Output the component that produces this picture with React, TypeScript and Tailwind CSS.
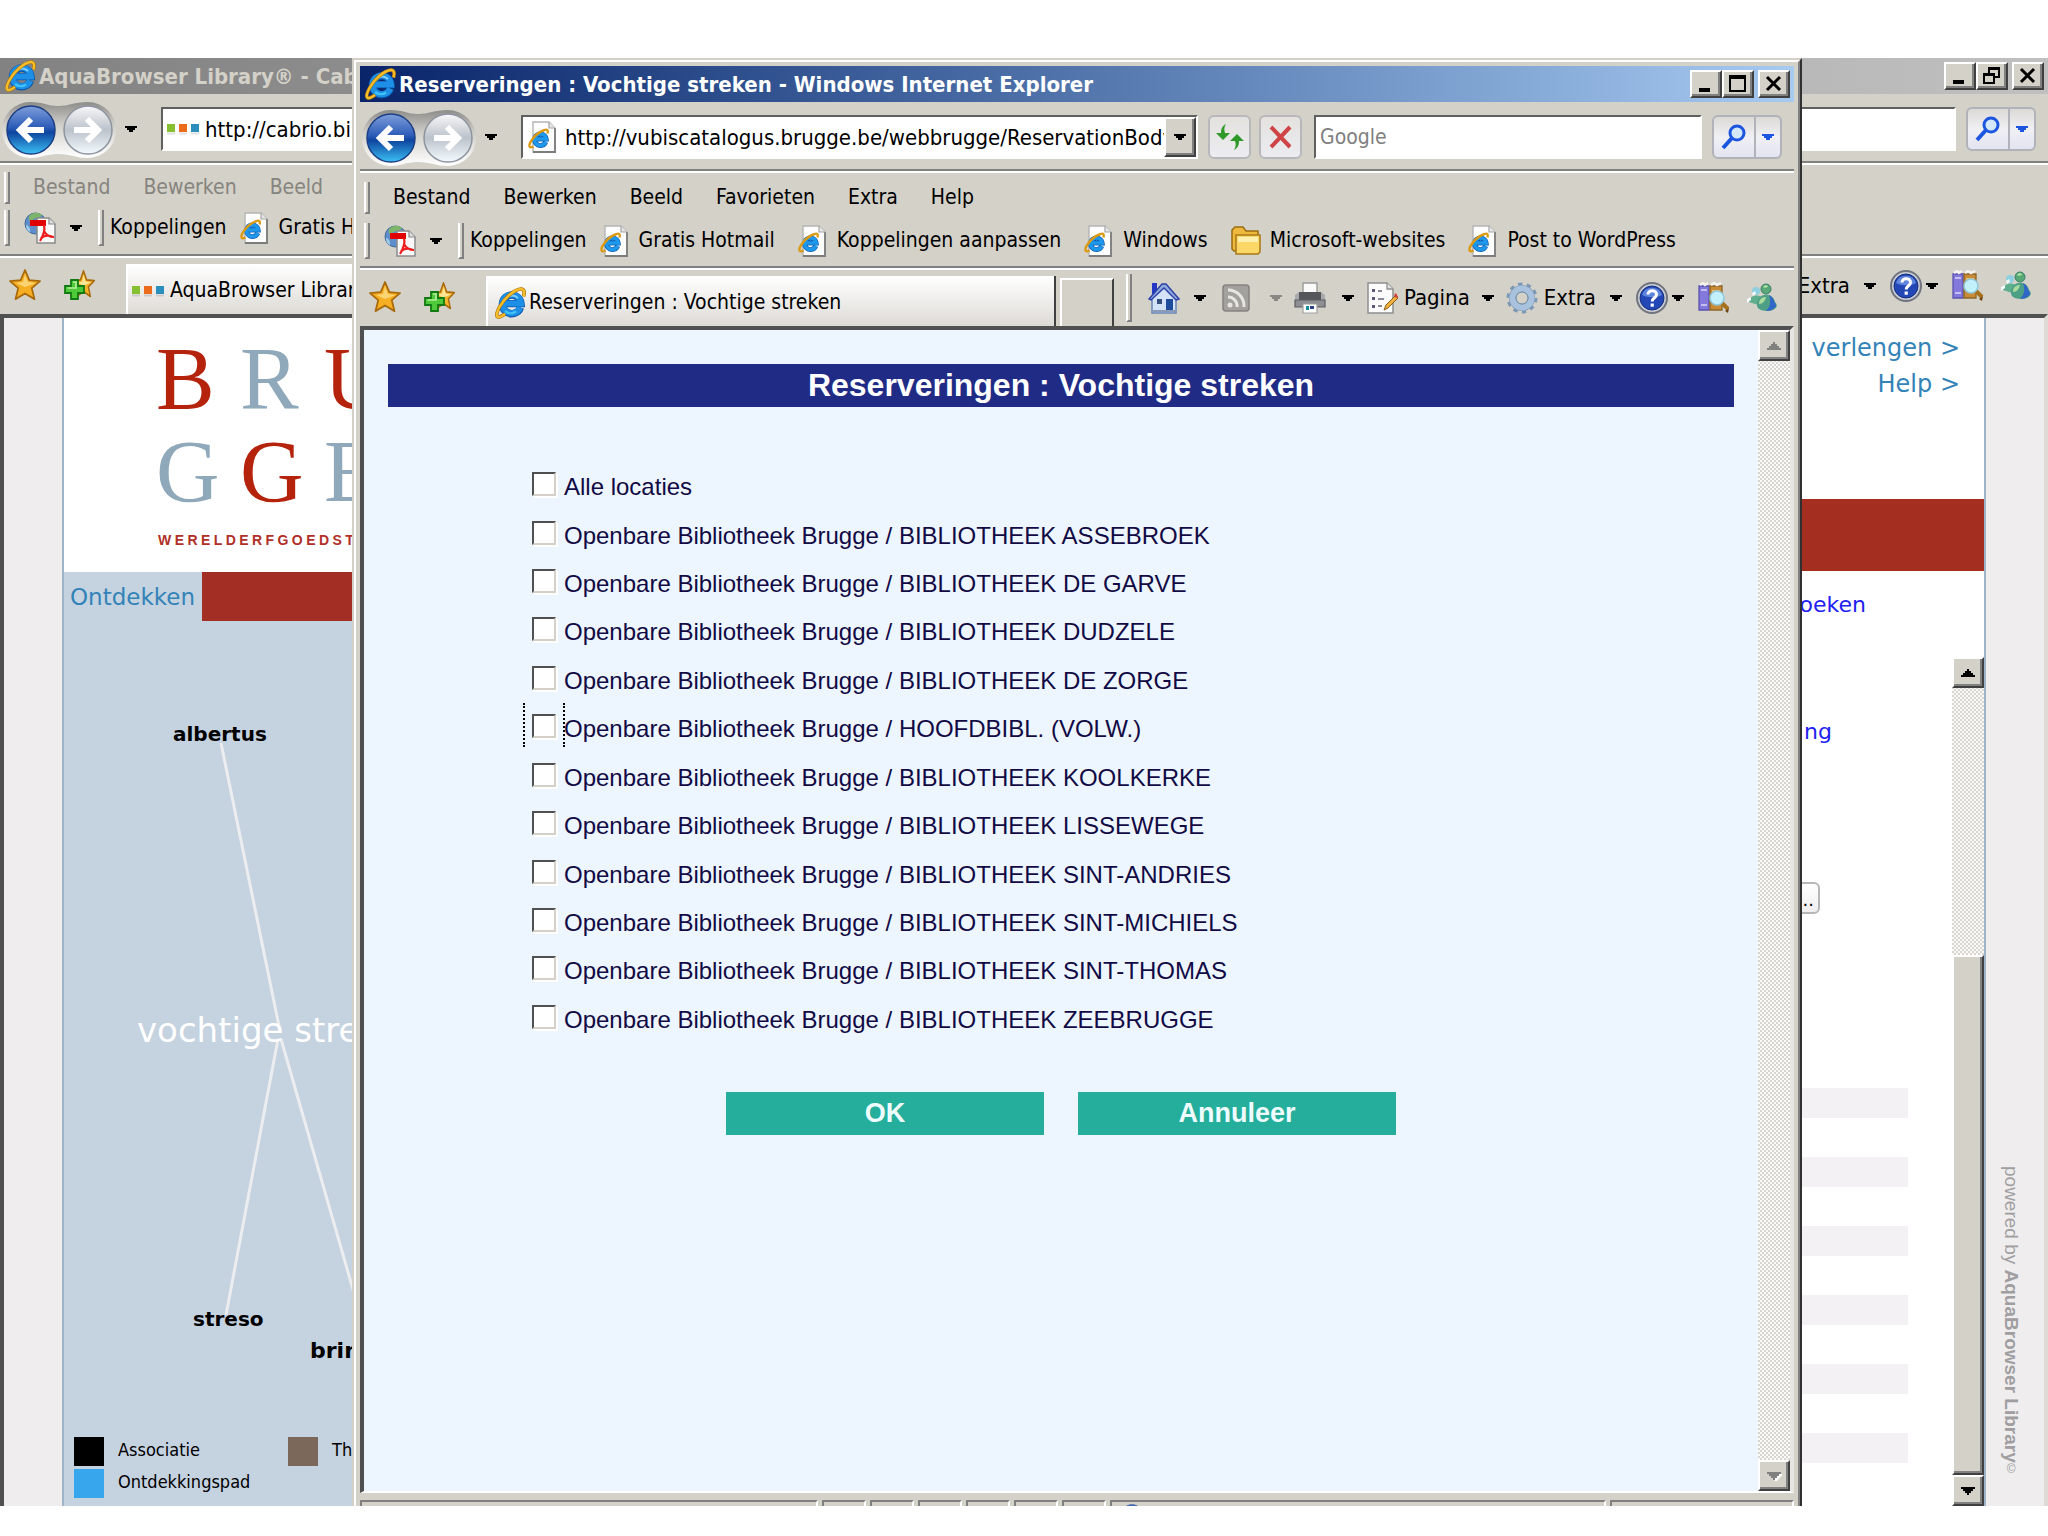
import React from 'react';

const raised =
  'border-2 border-t-white border-l-white border-r-[#404040] border-b-[#404040] bg-[#d4d1c9] shadow-[inset_-2px_-2px_0_#808080]';
const sunken = 'border-2 border-t-[#606060] border-l-[#606060] border-r-white border-b-white bg-white';
const dither = 'bg-[repeating-conic-gradient(#d8d4ce_0_25%,#fbfafa_0_50%)] bg-[length:4px_4px]';
const uiFont = "font-['DejaVu_Sans_Condensed','DejaVu_Sans',sans-serif]";
const pageFont = "font-['DejaVu_Sans',sans-serif]";

const locations = [
  'Alle locaties',
  'Openbare Bibliotheek Brugge / BIBLIOTHEEK ASSEBROEK',
  'Openbare Bibliotheek Brugge / BIBLIOTHEEK DE GARVE',
  'Openbare Bibliotheek Brugge / BIBLIOTHEEK DUDZELE',
  'Openbare Bibliotheek Brugge / BIBLIOTHEEK DE ZORGE',
  'Openbare Bibliotheek Brugge / HOOFDBIBL. (VOLW.)',
  'Openbare Bibliotheek Brugge / BIBLIOTHEEK KOOLKERKE',
  'Openbare Bibliotheek Brugge / BIBLIOTHEEK LISSEWEGE',
  'Openbare Bibliotheek Brugge / BIBLIOTHEEK SINT-ANDRIES',
  'Openbare Bibliotheek Brugge / BIBLIOTHEEK SINT-MICHIELS',
  'Openbare Bibliotheek Brugge / BIBLIOTHEEK SINT-THOMAS',
  'Openbare Bibliotheek Brugge / BIBLIOTHEEK ZEEBRUGGE',
];
const focusedLocation = 5;

/* ---------- icons ---------- */

function IeLogo({ className = 'size-8' }: { className?: string }) {
  return (
    <svg viewBox="0 0 32 32" className={`${className} shrink-0`} aria-hidden="true">
      <path d="M26.5 20.5A9.3 9.3 0 1 1 27 16.6H11" fill="none" stroke="#0a55a8" strokeWidth="7.4" />
      <path d="M26.3 20.5A9.3 9.3 0 1 1 27 16.6H11" fill="none" stroke="#1d8fe6" strokeWidth="6" />
      <path d="M10.5 12.5A9 9 0 0 1 24 11" fill="none" stroke="#7fd0ff" strokeWidth="2" />
      <path d="M11 24A9 9 0 0 0 22 24.5" fill="none" stroke="#3fc4f5" strokeWidth="2.4" />
      <path d="M29.5 9.5C31 5 30 1.5 26.5 2 20 2.8 10.5 11 5.5 20 1.5 27.5 2 31 6 29.8c1.6-.5 3.4-1.6 5-2.9" fill="none" stroke="#a8700a" strokeWidth="3.6" />
      <path d="M29.5 9.5C31 5 30 1.5 26.5 2 20 2.8 10.5 11 5.5 20 1.5 27.5 2 31 6 29.8c1.6-.5 3.4-1.6 5-2.9" fill="none" stroke="#f5bd2a" strokeWidth="2.4" />
    </svg>
  );
}

function IePage() {
  return (
    <svg viewBox="0 0 32 32" className="size-8 shrink-0" aria-hidden="true">
      <path d="M6 1h16l6 6v24H6z" fill="#fdfdfd" stroke="#b4b4b4" strokeWidth="1.4" />
      <path d="M28 7v24H6" fill="none" stroke="#7c7c7c" strokeWidth="1.8" />
      <path d="M22 1v6h6" fill="#e6e6e6" stroke="#a4a4a4" strokeWidth="1.2" />
      <path d="M18.8 21A5.8 5.8 0 1 1 19.2 18H9" fill="none" stroke="#0f5fb4" strokeWidth="4.8" />
      <path d="M18.8 21A5.8 5.8 0 1 1 19.2 18H9" fill="none" stroke="#1e98ea" strokeWidth="3.4" />
      <path d="M20.5 12.5C21.5 9 20 8 17.5 9 12 11 6.500 16 3.500 21c-2.200 4.500-1 6.500 3 4.500" fill="none" stroke="#dc9a12" strokeWidth="2.400" />
    </svg>
  );
}

function SiteDots() {
  return (
    <svg viewBox="0 0 32 12" className="h-3 w-8 shrink-0" aria-hidden="true">
      <rect x="0" y="1" width="8" height="8" fill="#86bf30" />
      <rect x="12" y="1" width="8" height="8" fill="#ec6a1c" />
      <rect x="24" y="1" width="8" height="8" fill="#2c8ebc" />
      <path d="M0 10.500h8M12 10.500h8M24 10.500h8" stroke="#000" strokeOpacity=".12" strokeWidth="2" />
    </svg>
  );
}

function Caret({ className = 'text-black' }: { className?: string }) {
  return (
    <svg viewBox="0 0 12 8" className={`h-2 w-3 shrink-0 ${className}`} aria-hidden="true">
      <path d="M0 1h12v2h-2v2H8v2H4V5H2V3H0z" fill="currentColor" />
    </svg>
  );
}

function PdfGlobe() {
  return (
    <svg viewBox="0 0 32 32" className="size-8 shrink-0" aria-hidden="true">
      <circle cx="11.500" cy="11.500" r="10.500" fill="#5d8ecb" stroke="#3d6695" strokeWidth="1" />
      <path d="M5 4c4-4 10-4 13-1-2 4-9 2-10 6-2 1-4-1-3-5z" fill="#7fb56b" />
      <path d="M2 13c2 0 5 3 4 7-3-1-4-4-4-7z" fill="#9cc9e8" />
      <path d="M13 6h12l6 6v19H13z" fill="#f8f8f8" stroke="#8a8a8a" strokeWidth="1.500" />
      <path d="M25 6v6h6" fill="#ddd" stroke="#8a8a8a" strokeWidth="1.200" />
      <path d="M6 8h16v6H6z" fill="#e00000" />
      <path d="M20 13c1 4 1 8-4 16M20 19c2 4 5 6 10 6M17 26c4-3 8-3 12-1" fill="none" stroke="#ee1c1c" strokeWidth="2.200" />
    </svg>
  );
}

const starPath = 'M16 1l4.300 10.200 10.700.900-8.200 7 2.700 11L16 24.500 6.500 30.100l2.700-11-8.200-7 10.700-.900z';

function Star() {
  return (
    <svg viewBox="0 0 32 32" className="size-8 shrink-0" aria-hidden="true">
      <path d={starPath} fill="#f6ae22" stroke="#a86a0c" strokeWidth="1.800" strokeLinejoin="round" />
      <path d="M16 5l3 8 8 1-11 4-9-4 7-1z" fill="#fbd474" />
    </svg>
  );
}

function StarAdd() {
  return (
    <svg viewBox="0 0 32 32" className="size-8 shrink-0" aria-hidden="true">
      <g transform="translate(9 1) scale(.72 .88)">
        <path d={starPath} fill="#f6b42c" stroke="#a86a0c" strokeWidth="2" strokeLinejoin="round" />
        <path d="M16 5l3 8 8 1-11 4-9-4 7-1z" fill="#fce596" />
      </g>
      <path d="M8 11h7v6h6v7h-6v6H8v-6H2v-7h6z" fill="#4fc93a" stroke="#127a12" strokeWidth="1.800" />
      <path d="M10 13h3v6H4.500" fill="none" stroke="#b4f09c" strokeWidth="1.600" />
    </svg>
  );
}

function HomeIcon() {
  return (
    <svg viewBox="0 0 32 32" className="size-8 shrink-0" aria-hidden="true">
      <path d="M4 1h5v11H4z" fill="#2438c4" />
      <path d="M4 15L16 4l12 11v16H4z" fill="#d3e2f6" stroke="#6b86b4" strokeWidth="1.500" />
      <path d="M1 17L14 2h4l13 15-3 1L16 6 3 18z" fill="#8fa9dc" stroke="#2b3fa8" strokeWidth="1.400" />
      <path d="M9 17h5v5H9z" fill="#35507c" />
      <path d="M18 17h7v13h-7z" fill="#1d4c9c" />
      <path d="M4 29h24" stroke="#8a9bb8" strokeWidth="2" />
    </svg>
  );
}

function FeedIcon() {
  return (
    <svg viewBox="0 0 28 28" className="size-7 shrink-0" aria-hidden="true">
      <rect x="1" y="1" width="26" height="26" rx="3" fill="#a3a19d" stroke="#858381" strokeWidth="1.500" />
      <circle cx="8" cy="21" r="2.500" fill="#e8e6e2" />
      <path d="M6 13a9 9 0 0 1 9 10M6 6a16 16 0 0 1 16 17" fill="none" stroke="#e8e6e2" strokeWidth="3" />
    </svg>
  );
}

function PrinterIcon() {
  return (
    <svg viewBox="0 0 32 32" className="size-8 shrink-0" aria-hidden="true">
      <path d="M9 1h14v11H9z" fill="#fafafa" stroke="#9a9a9a" strokeWidth="1.400" />
      <path d="M1 13l4-3v11H1zM31 13l-4-3v11h4z" fill="#a9a9ab" />
      <path d="M5 10h22v8H5z" fill="#55565a" />
      <path d="M1 18h30v7H1z" fill="#8d8f94" stroke="#5d5e62" strokeWidth="1.200" />
      <path d="M9 22h14v9H9z" fill="#fff" stroke="#a0a0a0" strokeWidth="1.200" />
      <path d="M12 24h3v4h-3z" fill="#188c9c" />
      <path d="M16 24h4v3h-4z" fill="#2b3f8c" />
    </svg>
  );
}

function PageIcon() {
  return (
    <svg viewBox="0 0 32 32" className="size-8 shrink-0" aria-hidden="true">
      <path d="M2 1h19l6 6v24H2z" fill="#fbfbfb" stroke="#8e8e8e" strokeWidth="1.500" />
      <path d="M21 1v6h6" fill="#e2e2e2" stroke="#8e8e8e" strokeWidth="1.300" />
      <path d="M6 7h3v3H6zM6 15h3v3H6zM6 23h3v3H6z" fill="#5a5a78" />
      <path d="M12 9h4M12 17h6M12 24h4" stroke="#8a8a98" strokeWidth="1.800" />
      <path d="M18 28l2-5 10-10 2 3-10 10z" fill="#f0b040" stroke="#8a6018" strokeWidth="1" />
      <path d="M28 13l2-2 2 4-2 1z" fill="#d23c3c" />
    </svg>
  );
}

function GearIcon() {
  return (
    <svg viewBox="0 0 32 32" className="size-8 shrink-0" aria-hidden="true">
      <circle cx="16" cy="16" r="13.500" fill="none" stroke="#7d97b4" strokeWidth="4" strokeDasharray="4.200 4.280" />
      <circle cx="16" cy="16" r="9" fill="none" stroke="#7d97b4" strokeWidth="8" />
      <circle cx="16" cy="16" r="9.500" fill="none" stroke="#a9c3de" strokeWidth="6" />
      <circle cx="16" cy="16" r="6" fill="#d4d1c9" stroke="#6f8aa6" strokeWidth="1" />
    </svg>
  );
}

function HelpIcon() {
  return (
    <svg viewBox="0 0 32 32" className="size-8 shrink-0" aria-hidden="true">
      <circle cx="16" cy="16" r="15" fill="#c9ccd4" stroke="#70747e" strokeWidth="2" />
      <circle cx="16" cy="16" r="12" fill="#2347b4" stroke="#17307e" strokeWidth="1" />
      <path d="M6 13a10.500 10.500 0 0 1 20 0c-6 3-14 3-20 0z" fill="#5f85dc" />
      <path d="M12 12.500c0-5 8.500-5 8.500 0 0 3.500-4.300 3-4.300 7" fill="none" stroke="#fff" strokeWidth="3" />
      <rect x="14.600" y="21.500" width="3.200" height="3.200" fill="#fff" />
    </svg>
  );
}

function ResearchIcon() {
  return (
    <svg viewBox="0 0 32 32" className="size-8 shrink-0" aria-hidden="true">
      <path d="M1 4h10v24H1z" fill="#8379dc" stroke="#5a52b0" strokeWidth="1.300" />
      <path d="M12 4h12v24H12z" fill="#c98b35" stroke="#8d6527" strokeWidth="1.300" />
      <path d="M2 3l3-2 2 2 3-2M13 3l3-2 3 2 4-2" fill="none" stroke="#f4f2ee" strokeWidth="2.500" />
      <path d="M3 8h6M3 23h6" stroke="#c4bdf6" strokeWidth="2" />
      <path d="M14 9h8" stroke="#e8bc6c" strokeWidth="2" />
      <path d="M24 21l6 6" stroke="#a8701a" strokeWidth="4" />
      <circle cx="19" cy="16" r="7" fill="#c2f0fb" stroke="#8fc8dc" strokeWidth="1.500" />
      <path d="M27 29l3 2 1-5z" fill="#6b4310" />
    </svg>
  );
}

function MessengerIcon() {
  return (
    <svg viewBox="0 0 32 32" className="size-8 shrink-0" aria-hidden="true">
      <circle cx="10" cy="9" r="4" fill="#8fd0e0" />
      <path d="M3 20c0-8 13-9 15-1l-6 4z" fill="#5fae8e" />
      <path d="M1 17l4-2v3l-4 3zM6 11l3-2 1 3-3 2z" fill="#f4fbff" />
      <circle cx="20" cy="7" r="5" fill="#58a878" stroke="#3a7f6a" strokeWidth="1" />
      <path d="M11 23c0-13 16-13 18-3 3 3 2 6-2 8-6 2-16 1-16-5z" fill="#4d9f86" />
      <path d="M23 13c4 2 5 6 6 8 2 3 1 4-2 6-1 1-4 2-7 2 5-5 5-10 3-16z" fill="#2f66c8" />
      <path d="M13 22c0-5 3-7 7-7-1 4-3 7-7 7z" fill="#a9dc9c" />
      <path d="M17 5c1-2 4-2 5-1-1 2-3 2-5 1z" fill="#b4e4a4" />
    </svg>
  );
}

function FolderIcon() {
  return (
    <svg viewBox="0 0 32 32" className="size-8 shrink-0" aria-hidden="true">
      <path d="M2 5l3-3h8l3 4h12v20H4l-2-2z" fill="#eeb93c" stroke="#9c6c10" strokeWidth="1.500" />
      <path d="M6 10h24v17l-2 2H6z" fill="#fbd768" stroke="#a87814" strokeWidth="1.500" />
      <path d="M8 12h20v5H8z" fill="#fff0ae" />
    </svg>
  );
}

/* ---------- window chrome ---------- */

function Grip({ className }: { className: string }) {
  return <div className={`w-1.5 shrink-0 border-r-2 border-b-2 border-l-2 border-r-[#808080] border-b-[#808080] border-l-white ${className}`} />;
}

function WindowButtons({ restore }: { restore?: boolean }) {
  const box = `flex h-7 w-8 items-center justify-center ${raised}`;
  return (
    <div className="flex shrink-0">
      <button className={box} aria-label="Minimaliseren">
        <svg viewBox="0 0 20 20" className="size-5"><path d="M3 14h11v4H3z" /></svg>
      </button>
      <button className={box} aria-label="Maximaliseren">
        <svg viewBox="0 0 20 20" className="size-5" fill="none" stroke="#000" strokeWidth="2">
          {restore ? (
            <path d="M7 7V3h10v8h-4M6 2h12M2 9h10v8H2zM1 8h12" />
          ) : (
            <path d="M2 2h15v15H2zM2 4h15" />
          )}
        </svg>
      </button>
      <button className={`ml-1 ${box}`} aria-label="Sluiten">
        <svg viewBox="0 0 20 20" className="size-5" stroke="#000" strokeWidth="3">
          <path d="M3 3l13 13M16 3L3 16" />
        </svg>
      </button>
    </div>
  );
}

function HistoryButtons() {
  return (
    <div className="relative flex shrink-0">
      <svg viewBox="0 0 116 60" className="absolute inset-0 h-[60px] w-[116px]" aria-hidden="true">
        <defs>
          <linearGradient id="rail" x1="0" y1="0" x2="0" y2="1">
            <stop offset="0" stopColor="#8c8c8a" />
            <stop offset=".4" stopColor="#d0cec8" />
            <stop offset="1" stopColor="#ffffff" />
          </linearGradient>
          <linearGradient id="backFill" x1="0" y1="0" x2="0" y2="1">
            <stop offset="0" stopColor="#7f9edb" />
            <stop offset=".45" stopColor="#2c5cb8" />
            <stop offset=".55" stopColor="#0d459f" />
            <stop offset="1" stopColor="#3cc0f4" />
          </linearGradient>
          <linearGradient id="forwardFill" x1="0" y1="0" x2="0" y2="1">
            <stop offset="0" stopColor="#f7f8fa" />
            <stop offset=".5" stopColor="#bcc2ca" />
            <stop offset="1" stopColor="#f4fbff" />
          </linearGradient>
        </defs>
        <path d="M30 3c14 0 17 4 28 4S74 3 88 3a28 28 0 0 1 0 56c-12 0-17-4-30-4s-16 4-28 4A28 28 0 0 1 30 3z" fill="url(#rail)" />
      </svg>
      <button className="relative" aria-label="Vorige">
        <svg viewBox="0 0 58 60" className="h-[60px] w-[58px]">
          <circle cx="31" cy="31" r="24" fill="url(#backFill)" stroke="#1d3f86" strokeWidth="1.500" />
          <path d="M44 31H20M31 20L20 31l11 11" fill="none" stroke="#fff" strokeWidth="6" />
        </svg>
      </button>
      <button className="relative" aria-label="Volgende">
        <svg viewBox="0 0 58 60" className="h-[60px] w-[58px]">
          <circle cx="30" cy="31" r="24" fill="url(#forwardFill)" stroke="#8d949e" strokeWidth="1.500" />
          <path d="M16 31h24M29 20l11 11-11 11" fill="none" stroke="#fff" strokeWidth="6" />
        </svg>
      </button>
    </div>
  );
}

function SearchBox({ id, hint }: { id: string; hint?: string }) {
  return (
    <>
      <input
        id={id}
        aria-label="Zoeken"
        placeholder={hint}
        className={`ml-3 h-11 w-[388px] shrink-0 px-1 text-[21px] placeholder:text-[#808080] ${sunken}`}
      />
      <div className="ml-2.5 flex h-11 shrink-0 rounded-md border-2 border-[#b2b2ba] bg-linear-to-b from-[#dcdad6] via-[#f0f0f4] to-[#e2e4f0]">
        <button className="flex w-10 items-center justify-center" aria-label="Zoeken starten">
          <svg viewBox="0 0 28 28" className="size-7" fill="none" stroke="#1c56e0">
            <circle cx="17" cy="10" r="7" fill="#d4e8fc" strokeWidth="3" />
            <path d="M12 15L3 25" strokeWidth="4" />
          </svg>
        </button>
        <button className="flex w-[26px] items-center justify-center border-l-2 border-[#b2b2ba]" aria-label="Zoekopties">
          <Caret className="text-[#1c56e0]" />
        </button>
      </div>
    </>
  );
}

function Favorites() {
  return (
    <div className="flex shrink-0 gap-[22px] pb-0.5 pl-[9px]">
      <button aria-label="Favorieten"><Star /></button>
      <button aria-label="Toevoegen aan favorieten"><StarAdd /></button>
    </div>
  );
}

/* compact leaves out the page tools that the popup covers */
function CommandBar({ compact }: { compact?: boolean }) {
  return (
    <div className="ml-3 flex shrink-0 items-center pr-4 text-[22px] leading-8">
      {!compact && (
        <>
          <Grip className="h-12" />
          <button className="ml-4 flex items-center gap-3.5" aria-label="Startpagina"><HomeIcon /><Caret /></button>
          <button className="ml-4 flex items-center gap-5" aria-label="Feeds"><FeedIcon /><Caret className="text-[#8a8884]" /></button>
          <button className="ml-3 flex items-center gap-4" aria-label="Afdrukken"><PrinterIcon /><Caret /></button>
          <button className="ml-3 flex items-center gap-1.5"><PageIcon />Pagina<Caret className="ml-1.5 text-black" /></button>
        </>
      )}
      <button className="ml-3 flex items-center gap-1.5"><GearIcon />Extra<Caret className="ml-2 text-black" /></button>
      <button className="ml-3.5 flex items-center gap-1" aria-label="Help"><HelpIcon /><Caret /></button>
      <button className="ml-3.5" aria-label="Onderzoek"><ResearchIcon /></button>
      <button className="ml-4" aria-label="Messenger"><MessengerIcon /></button>
    </div>
  );
}

function MenuBar({ items, className }: { items: string[]; className: string }) {
  return (
    <nav className={`flex shrink-0 items-center pt-1 ${className}`}>
      <Grip className="ml-1 h-8" />
      <div className="ml-[23px] flex gap-[33px]">
        {items.map((item) => (
          <button key={item}>{item}</button>
        ))}
      </div>
    </nav>
  );
}

function LinksBar({ className, children }: { className: string; children: React.ReactNode }) {
  return (
    <div className={`flex shrink-0 items-center pb-1 whitespace-nowrap ${className}`}>
      <Grip className="ml-1 h-9" />
      <button className="ml-3.5 flex items-center gap-3.5" aria-label="PDF"><PdfGlobe /><Caret /></button>
      <Grip className="ml-4 h-9" />
      <span className="ml-1.5">Koppelingen</span>
      <div className="ml-3 flex gap-[22px]">{children}</div>
    </div>
  );
}

function Etched() {
  return <div className="h-1 shrink-0 border-t-2 border-b-2 border-t-[#808080] border-b-white" />;
}

function ScrollButton({ down, dim }: { down?: boolean; dim?: boolean }) {
  return (
    <button
      aria-label={down ? 'Omlaag' : 'Omhoog'}
      className={`flex h-[31px] w-full shrink-0 items-center justify-center ${raised} ${dim ? 'text-[#808080]' : 'text-black'}`}
    >
      <svg viewBox="0 0 16 10" className="h-2.5 w-4">
        {dim && <path d={down ? 'M3 3h14l-7 8z' : 'M2 10h14v1H2z'} fill="#fff" />}
        <path d={down ? 'M1 1h14v2h-2v2h-2v2H9v2H7V7H5V5H3V3H1z' : 'M1 9h14V7h-2V5h-2V3H9V1H7v2H5v2H3v2H1z'} fill="currentColor" />
      </svg>
    </button>
  );
}

/* ---------- background window ---------- */

function WordCloud() {
  return (
    <div className="relative flex-1 font-bold">
      <svg className="absolute inset-0 h-full w-full" stroke="#ecedef" aria-hidden="true">
        <path d="M157 122L216 410" strokeWidth="3" />
        <path d="M214 418L162 694" strokeWidth="3" />
        <path d="M217 418L290 672" strokeWidth="3" />
      </svg>
      <span className="absolute top-[98px] left-[109px] text-[20px]">albertus</span>
      <span className="absolute top-[384px] left-[73px] text-[34px] font-normal whitespace-nowrap text-white">vochtige stre</span>
      <span className="absolute top-[683px] left-[129px] text-[20px]">streso</span>
      <span className="absolute top-[713px] left-[246px] text-[22px]">brin</span>
    </div>
  );
}

function LibraryPage() {
  return (
    <div className={`flex min-h-0 flex-1 border-t-4 border-r-4 border-l-4 border-t-[#505050] border-r-[#dedbd6] border-l-[#505050] bg-[#efedee] ${pageFont}`}>
      <div className="ml-[58px] flex flex-1 border-r-2 border-l-2 border-[#9fb4c6] bg-white">
        <div className="flex w-1/2 flex-col">
          <div className="flex h-[254px] shrink-0 flex-col pt-3.5 pl-[92px]">
            <div className="grid w-[252px] grid-cols-3 font-['Liberation_Serif',serif] text-[88px] leading-[93px] text-[#b5230c]">
              <span>B</span>
              <span className="text-[#8fa9ba]">R</span>
              <span>U</span>
              <span className="text-[#8fa9ba]">G</span>
              <span>G</span>
              <span className="text-[#8fa9ba]">E</span>
            </div>
            <div className="mt-3 ml-0.5 flex w-[196px] justify-between font-['Liberation_Sans',sans-serif] text-[14px] font-bold text-[#b03028]">
              {'WERELDERFGOEDST'.split('').map((letter, i) => (
                <span key={i}>{letter}</span>
              ))}
            </div>
          </div>
          <div className="flex h-[49px] shrink-0 bg-[#a22e24]">
            <a href="#" className="w-[138px] bg-[#c5d3e0] pt-2 pl-1.5 text-[23px] text-[#3383b8]">Ontdekken</a>
          </div>
          <div className="flex flex-1 flex-col bg-[#c5d2e0]">
            <WordCloud />
            <div className={`grid grid-cols-[214px_1fr] gap-y-[3px] pb-2 pl-2.5 text-[18px] leading-[26px] ${uiFont}`}>
              <div className="flex gap-3.5"><i className="h-[29px] w-[30px] bg-black" />Associatie</div>
              <div className="flex gap-3.5"><i className="h-[29px] w-[30px] bg-[#7b685a]" />Th</div>
              <div className="flex gap-3.5"><i className="h-[29px] w-[30px] bg-[#38a6ec]" />Ontdekkingspad</div>
            </div>
          </div>
        </div>
        <div className="flex flex-1 flex-col">
          <div className="flex h-[181px] shrink-0 flex-col items-end pt-3 pr-6 text-[24px] leading-9 text-[#3383b8]">
            <a href="#">verlengen &gt;</a>
            <a href="#">Help &gt;</a>
          </div>
          <div className="h-[72px] shrink-0 bg-[#a42f20]" />
          <div className="flex h-[86px] shrink-0 items-start justify-end pt-[17px] pr-[118px] text-[22px] text-[#2020f0]">
            <a href="#">oeken</a>
          </div>
          <div className="flex min-h-0 flex-1">
            <div className="flex flex-1 flex-col">
              <div className="flex justify-end pt-[58px] pr-[120px] text-[22px] text-[#2020f0]"><a href="#">ng</a></div>
              <div className="flex justify-end pt-[134px] pr-[132px]">
                <button className="h-8 w-24 rounded-md border-2 border-[#b8b6b8] bg-linear-to-b from-white to-[#f0eef0] pr-1 text-right text-[18px] leading-8">...</button>
              </div>
              <div className="mt-[174px] flex flex-col gap-[39px] pr-11">
                {[0, 1, 2, 3, 4, 5].map((row) => (
                  <div key={row} className="h-[30px] bg-[#f3f1f3]" />
                ))}
              </div>
            </div>
            <div className={`flex w-8 flex-col ${dither}`}>
              <ScrollButton />
              <div className={`mt-auto h-[520px] ${raised}`} />
              <ScrollButton down />
            </div>
          </div>
        </div>
      </div>
      <div className="flex w-[58px] flex-col items-center justify-end pr-2 pb-6 text-[#a09ea0]">
        <div className="font-['Liberation_Sans',sans-serif] text-[19px] [writing-mode:vertical-rl]">
          powered by <b>AquaBrowser Library</b> <sup className="text-[12px]">©</sup>
        </div>
      </div>
    </div>
  );
}

function BackgroundWindow() {
  return (
    <section className="flex min-w-0 flex-1 flex-col bg-[#d4d1c9]">
      <header className="flex h-9 shrink-0 items-center bg-linear-to-r from-[#828282] to-[#c0c0c0] pr-1 pl-1">
        <IeLogo />
        <h1 className="ml-[3px] flex-1 text-[22px] font-bold text-[#d4d1c9]">AquaBrowser Library® - Cab</h1>
        <WindowButtons restore />
      </header>
      <div className="flex h-[67px] shrink-0 items-center pt-[3px] pr-3">
        <HistoryButtons />
        <button className="ml-[9px] shrink-0" aria-label="Recente pagina's"><Caret className="text-black" /></button>
        <div className={`ml-6 flex h-11 min-w-0 flex-1 items-center pl-1 ${sunken}`}>
          <SiteDots />
          <input aria-label="Adres" defaultValue="http://cabrio.bi" className="ml-1.5 min-w-0 flex-1 text-[22px]" />
        </div>
        <SearchBox id="back-search" />
      </div>
      <Etched />
      <MenuBar items={['Bestand', 'Bewerken', 'Beeld']} className="h-[41px] text-[#86847e]" />
      <LinksBar className="h-12">
        <a href="#" className="flex items-center gap-2"><IePage />Gratis H</a>
      </LinksBar>
      <Etched />
      <div className="flex h-14 shrink-0 items-center">
        <Favorites />
        <div className="ml-[31px] flex h-[50px] flex-1 items-center self-end border-l-2 border-white bg-linear-to-b from-white to-[#dedbd6] pt-1 pl-1">
          <SiteDots />
          <span className="ml-1.5">AquaBrowser Librar</span>
        </div>
        <CommandBar compact />
      </div>
      <LibraryPage />
    </section>
  );
}

/* ---------- reservation popup ---------- */

function ReservationForm() {
  return (
    <form className="flex-1 bg-[#edf6ff] pt-[34px] pr-6 pl-6 font-['Liberation_Sans',Arial,sans-serif]">
      <h2 className="bg-[#202b85] text-center text-[32px] leading-[43px] font-bold text-white">
        Reserveringen : Vochtige streken
      </h2>
      <ul className="mt-14 ml-36 flex h-[581px] flex-col text-[24px] text-[#120a44]">
        {locations.map((name, i) => (
          <li key={name} className="flex flex-1 items-center">
            <label className="relative flex items-center gap-2">
              <input
                type="checkbox"
                className="mb-1.5 size-6 appearance-none border-2 border-t-[#505050] border-r-[#d4d0c8] border-b-[#d4d0c8] border-l-[#505050] bg-white shadow-[2px_2px_0_#fff]"
              />
              {name}
              {i === focusedLocation && (
                <span className="absolute -top-2 -left-[9px] h-11 w-[42px] border-r-2 border-l-2 border-dotted border-black" />
              )}
            </label>
          </li>
        ))}
      </ul>
      <div className="mt-12 flex justify-center gap-[34px] text-[27px] leading-[43px] font-bold text-[#eefcff]">
        <button type="button" className="w-[318px] bg-[#24ae9b]">OK</button>
        <button type="button" className="w-[318px] bg-[#24ae9b]">Annuleer</button>
      </div>
    </form>
  );
}

function StatusBar() {
  const cell = 'border-t-2 border-r-2 border-l-2 border-t-[#808080] border-r-white border-l-[#808080]';
  return (
    <footer className="flex h-[13px] shrink-0 gap-1 overflow-hidden pt-[7px]">
      <div className={`w-[458px] ${cell}`} />
      {[0, 1, 2, 3, 4, 5].map((n) => (
        <div key={n} className={`w-11 ${cell}`} />
      ))}
      <div className={`flex-1 pl-3 ${cell}`}>
        <svg viewBox="0 0 16 4" className="mt-0.5 h-1 w-4"><path d="M0 4c3-5 13-5 16 0z" fill="#4668b0" /></svg>
      </div>
      <div className={`w-[184px] ${cell}`} />
    </footer>
  );
}

function PopupWindow() {
  return (
    <section className="absolute top-[58px] right-[246px] bottom-[30px] left-[352px] flex flex-col border-t-2 border-r-2 border-l-2 border-t-[#d4d0c8] border-r-[#303030] border-l-[#d4d0c8] bg-[#d4d1c9]">
      <div className="flex min-h-0 flex-1 flex-col border-t-2 border-r-2 border-l-2 border-t-white border-r-[#808080] border-l-white pt-1 pr-1 pl-1">
        <header className="flex h-9 shrink-0 items-center bg-linear-to-r from-[#0a246a] to-[#a6caf0] pr-1 pl-1">
          <IeLogo />
          <h1 className="ml-[3px] flex-1 text-[22px] font-bold text-white">
            Reserveringen : Vochtige streken - Windows Internet Explorer
          </h1>
          <WindowButtons />
        </header>
        <div className="flex h-[67px] shrink-0 items-center pt-[3px] pr-3">
          <HistoryButtons />
          <button className="ml-[9px] shrink-0" aria-label="Recente pagina's"><Caret className="text-black" /></button>
          <div className={`ml-6 flex h-11 min-w-0 flex-1 items-center pl-1 ${sunken}`}>
            <IePage />
            <input
              aria-label="Adres"
              defaultValue="http://vubiscatalogus.brugge.be/webbrugge/ReservationBody"
              className="ml-1.5 min-w-0 flex-1 text-[22px]"
            />
            <button className={`flex h-full w-8 shrink-0 items-center justify-center ${raised}`} aria-label="Adreslijst"><Caret /></button>
          </div>
          <button className="ml-2.5 flex h-11 w-[43px] shrink-0 items-center justify-center rounded-md border-2 border-[#b8b8bc] bg-linear-to-b from-[#e4e2de] to-[#ececf2]" aria-label="Vernieuwen">
            <svg viewBox="0 0 28 28" className="size-7" fill="#2f9a2a">
              <path d="M10 1c-4 2-5 5-5 9H0l7 7 7-7H9c-1-3-1-6 1-9z" />
              <path d="M18 27c4-2 5-5 5-9h5l-7-7-7 7h5c1 3 1 6-1 9z" />
            </svg>
          </button>
          <button className="ml-2 flex h-11 w-[43px] shrink-0 items-center justify-center rounded-md border-2 border-[#b8b8bc] bg-linear-to-b from-[#e4e2de] to-[#ececf2]" aria-label="Stoppen">
            <svg viewBox="0 0 28 28" className="size-7" fill="none" stroke="#cf4547" strokeWidth="4">
              <path d="M4 4l19 20M23 4L4 24" />
            </svg>
          </button>
          <SearchBox id="popup-search" hint="Google" />
        </div>
        <Etched />
        <MenuBar items={['Bestand', 'Bewerken', 'Beeld', 'Favorieten', 'Extra', 'Help']} className="h-[46px]" />
        <LinksBar className="h-[47px]">
          <a href="#" className="flex items-center gap-2"><IePage />Gratis Hotmail</a>
          <a href="#" className="flex items-center gap-2"><IePage />Koppelingen aanpassen</a>
          <a href="#" className="flex items-center gap-2"><IePage />Windows</a>
          <a href="#" className="flex items-center gap-2"><FolderIcon />Microsoft-websites</a>
          <a href="#" className="flex items-center gap-2"><IePage />Post to WordPress</a>
        </LinksBar>
        <Etched />
        <div className="flex h-14 shrink-0 items-center">
          <Favorites />
          <div className="ml-[31px] flex h-[50px] min-w-0 flex-1 items-center self-end border-r-2 border-l-2 border-r-[#404040] border-l-white bg-linear-to-b from-white to-[#dedbd6] pt-1 pl-1.5">
            <IeLogo />
            <span className="ml-[3px]">Reserveringen : Vochtige streken</span>
          </div>
          <button className="ml-1 h-12 w-[54px] shrink-0 self-end border-t-2 border-r-2 border-l-2 border-t-white border-r-[#404040] border-l-white" aria-label="Nieuw tabblad" />
          <CommandBar />
        </div>
        <div className="flex min-h-0 flex-1 border-t-4 border-r-4 border-b-2 border-l-4 border-t-[#505050] border-r-[#e8e6e2] border-b-white border-l-[#505050]">
          <ReservationForm />
          <div className={`flex w-8 shrink-0 flex-col justify-between ${dither}`}>
            <ScrollButton dim />
            <ScrollButton down dim />
          </div>
        </div>
        <StatusBar />
      </div>
    </section>
  );
}

export default function App() {
  return (
    <main className={`relative flex h-screen overflow-hidden bg-white pt-[58px] pb-[30px] text-[21px] text-black ${uiFont}`}>
      <BackgroundWindow />
      <PopupWindow />
    </main>
  );
}
